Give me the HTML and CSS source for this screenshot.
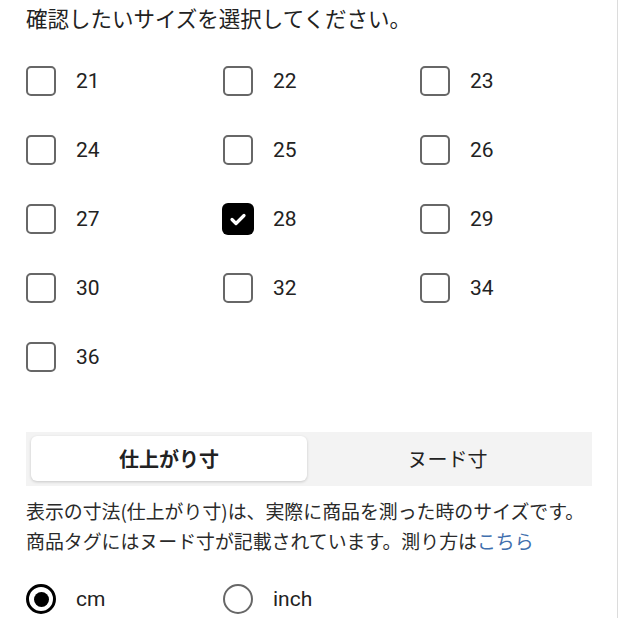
FILE: index.html
```html
<!DOCTYPE html>
<html lang="ja">
<head>
<meta charset="utf-8">
<link rel="stylesheet" href="styles.css">
</head>
<body>
<div class="page">
  <p class="title">確認したいサイズを選択してください。</p>
  <div class="sizes">
    <label class="opt"><span class="box"></span><span class="lbl">21</span></label>
    <label class="opt"><span class="box"></span><span class="lbl">22</span></label>
    <label class="opt"><span class="box"></span><span class="lbl">23</span></label>
    <label class="opt"><span class="box"></span><span class="lbl">24</span></label>
    <label class="opt"><span class="box"></span><span class="lbl">25</span></label>
    <label class="opt"><span class="box"></span><span class="lbl">26</span></label>
    <label class="opt"><span class="box"></span><span class="lbl">27</span></label>
    <label class="opt"><span class="box checked"><svg viewBox="0 0 32 32" width="32" height="32"><path d="M10 16.5 L14 20.5 L22 12.5" fill="none" stroke="#fff" stroke-width="3.2" stroke-linecap="round" stroke-linejoin="round"/></svg></span><span class="lbl">28</span></label>
    <label class="opt"><span class="box"></span><span class="lbl">29</span></label>
    <label class="opt"><span class="box"></span><span class="lbl">30</span></label>
    <label class="opt"><span class="box"></span><span class="lbl">32</span></label>
    <label class="opt"><span class="box"></span><span class="lbl">34</span></label>
    <label class="opt"><span class="box"></span><span class="lbl">36</span></label>
  </div>
  <div class="seg">
    <div class="tab active">仕上がり寸</div>
    <div class="tab">ヌード寸</div>
  </div>
  <p class="desc">表示の寸法(仕上がり寸)は、実際に商品を測った時のサイズです。<br>商品タグにはヌード寸が記載されています。測り方は<a class="link">こちら</a></p>
  <div class="units">
    <label class="opt"><span class="radio on"></span><span class="lbl">cm</span></label>
    <label class="opt"><span class="radio"></span><span class="lbl">inch</span></label>
  </div>
</div>
</body>
</html>
```
FILE: styles.css
```css
html, body {
  margin: 0;
  padding: 0;
  background: #fff;
}
.page {
  box-sizing: border-box;
  width: 618px;
  height: 618px;
  overflow: hidden;
  padding-left: 26px;
  border-right: 1px solid #dcdcdc;
  font-family: "Noto Sans CJK JP", sans-serif;
  color: #222;
}
.title {
  margin: 0;
  font-size: 21.5px;
  line-height: 36px;
  white-space: nowrap;
}
.sizes {
  margin-top: 10px;
  display: grid;
  grid-template-columns: 197px 197px 197px;
  grid-auto-rows: 69px;
}
.opt {
  display: flex;
  align-items: center;
  gap: 20px;
}
.box {
  box-sizing: border-box;
  width: 30px;
  height: 30px;
  border: 2.8px solid #676767;
  border-radius: 5px;
  flex: none;
}
.box.checked {
  width: 32px;
  height: 32px;
  margin-left: -1px;
  margin-right: -1px;
  border: none;
  background: #000;
  border-radius: 6px;
}
.box.checked svg {
  display: block;
}
.lbl {
  font-family: Roboto, "Noto Sans CJK JP", sans-serif;
  font-size: 21px;
  color: #222;
}
.seg {
  margin-top: 41px;
  margin-right: 25px;
  height: 54px;
  box-sizing: border-box;
  padding: 4px 4px 5px 5px;
  background: #f3f3f3;
  display: grid;
  grid-template-columns: 276px 1fr;
}
.tab {
  display: flex;
  align-items: center;
  justify-content: center;
  font-size: 20px;
  color: #222;
}
.tab.active {
  background: #fff;
  border-radius: 6px;
  font-weight: bold;
  box-shadow: 0 1px 3px rgba(0,0,0,0.18);
}
.desc {
  margin: 10px 0 0;
  font-size: 18.9px;
  line-height: 30px;
  color: #2a2a2a;
  white-space: nowrap;
}
.link {
  color: #3f6fae;
}
.units {
  margin-top: 28px;
  display: grid;
  grid-template-columns: 197px 197px;
  height: 30px;
}
.radio {
  box-sizing: border-box;
  width: 30px;
  height: 30px;
  border-radius: 50%;
  border: 2.8px solid #676767;
  flex: none;
  display: flex;
  align-items: center;
  justify-content: center;
}
.radio.on {
  border: 3px solid #000;
}
.radio.on::after {
  content: "";
  width: 15px;
  height: 15px;
  border-radius: 50%;
  background: #000;
}
```
